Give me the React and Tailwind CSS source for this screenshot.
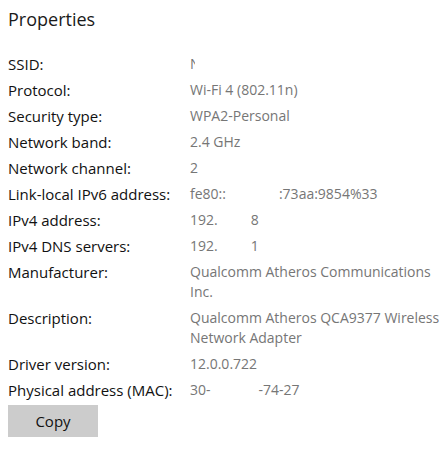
import React from "react";

// gap = blank, masked part of a value (as in the screenshot)
const Gap = ({ w }) => <span className={`inline-block ${w}`} />;

const rows = [
  ["SSID:", <span className="inline-block w-[5px] overflow-hidden align-bottom">N</span>],
  ["Protocol:", "Wi-Fi 4 (802.11n)"],
  ["Security type:", "WPA2-Personal"],
  ["Network band:", "2.4 GHz"],
  ["Network channel:", "2"],
  ["Link-local IPv6 address:", <>fe80::<Gap w="w-[53px]" />:73aa:9854%33</>],
  ["IPv4 address:", <>192.<Gap w="w-[33px]" />8</>],
  ["IPv4 DNS servers:", <>192.<Gap w="w-[33px]" />1</>],
  ["Manufacturer:", "Qualcomm Atheros Communications Inc."],
  ["Description:", "Qualcomm Atheros QCA9377 Wireless Network Adapter"],
  ["Driver version:", "12.0.0.722"],
  ["Physical address (MAC):", <>30-<Gap w="w-[48px]" />-74-27</>],
];

const App = () => {
  return (
    <div className="w-[448px] h-[449px] bg-white overflow-hidden font-['Open_Sans',sans-serif]">
      <div className="pl-2 pt-[5px]">
        <h2 className="text-[18px] leading-[28px] text-[#1a1a1a]">Properties</h2>
        <div className="mt-[21px] grid grid-cols-[182px_1fr] gap-y-[6px] leading-[20px]">
          {rows.map(([label, value]) => (
            <React.Fragment key={label}>
              <div className="text-[15px] text-[#111]">{label}</div>
              <div className="text-[14px] text-[#767676] pr-1">{value}</div>
            </React.Fragment>
          ))}
        </div>
        <button className="mt-[5px] w-[90px] h-[32px] bg-[#cccccc] text-[15px] text-[#111]">
          Copy
        </button>
      </div>
    </div>
  );
};

export default App;
